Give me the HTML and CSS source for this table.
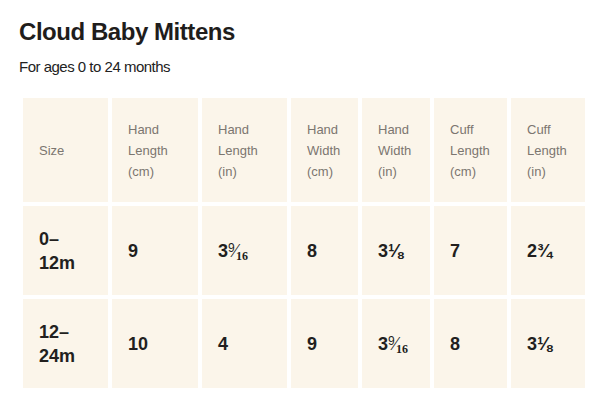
FILE: index.html
```html
<!DOCTYPE html>
<html>
<head>
<meta charset="utf-8">
<link rel="stylesheet" href="styles.css">
</head>
<body>
<div class="page">
  <h1 class="title">Cloud Baby Mittens</h1>
  <p class="subtitle">For ages 0 to 24 months</p>
  <table class="sizes">
    <colgroup>
      <col class="c1"><col class="c2"><col class="c3"><col class="c4"><col class="c5"><col class="c6"><col class="c7">
    </colgroup>
    <thead>
      <tr>
        <th>Size</th>
        <th>Hand Length (cm)</th>
        <th>Hand Length (in)</th>
        <th>Hand Width (cm)</th>
        <th>Hand Width (in)</th>
        <th>Cuff Length (cm)</th>
        <th>Cuff Length (in)</th>
      </tr>
    </thead>
    <tbody>
      <tr>
        <td>0–<br>12m</td>
        <td>9</td>
        <td>3<span class="num">9</span><span class="slash">⁄</span><span class="den">16</span></td>
        <td>8</td>
        <td>3<span class="vf">⅛</span></td>
        <td>7</td>
        <td>2<span class="vf">¾</span></td>
      </tr>
      <tr>
        <td>12–<br>24m</td>
        <td>10</td>
        <td>4</td>
        <td>9</td>
        <td>3<span class="num">9</span><span class="slash">⁄</span><span class="den">16</span></td>
        <td>8</td>
        <td>3<span class="vf">⅛</span></td>
      </tr>
    </tbody>
  </table>
</div>
</body>
</html>
```

FILE: styles.css
```css
html, body {
  margin: 0;
  padding: 0;
  background: #ffffff;
}
.page {
  padding: 17px 12px 0 19px;
  font-family: "Liberation Sans", Arial, sans-serif;
  color: #1f1d1c;
}
.title {
  margin: 0;
  font-size: 24px;
  line-height: 30px;
  font-weight: 700;
  letter-spacing: -0.45px;
}
.subtitle {
  margin: 10px 0 0 0;
  font-size: 15px;
  line-height: 20px;
  letter-spacing: -0.5px;
  color: #222;
}
.sizes {
  margin: 17px 0 0 0;
  width: 570px;
  border-collapse: separate;
  border-spacing: 4px;
  table-layout: fixed;
}
.c1 { width: 85px; }
.c2 { width: 86px; }
.c3 { width: 85px; }
.c4 { width: 67px; }
.c5 { width: 68px; }
.c6 { width: 73px; }
.c7 { width: 74px; }
.sizes th, .sizes td {
  background: #fbf5ea;
  padding: 20px 16px;
  text-align: left;
  vertical-align: middle;
}
.sizes th {
  font-size: 13px;
  line-height: 21px;
  font-weight: 400;
  color: #7b7670;
  height: 64px;
}
.sizes td {
  font-size: 18px;
  line-height: 24px;
  font-weight: 700;
  color: #221f1e;
  height: 49px;
}
.num {
  font-size: 12px;
  font-weight: 400;
  vertical-align: 5px;
  line-height: 0;
}
.slash {
  font-family: "Liberation Serif", "DejaVu Serif", serif;
  font-size: 19px;
  font-weight: 400;
  line-height: 0;
  margin: 0 -1px;
}
.den {
  font-family: "Liberation Serif", "DejaVu Serif", serif;
  font-size: 12px;
  font-weight: 700;
  vertical-align: -3px;
  line-height: 0;
}
.vf {
  font-size: 18px;
}
```
